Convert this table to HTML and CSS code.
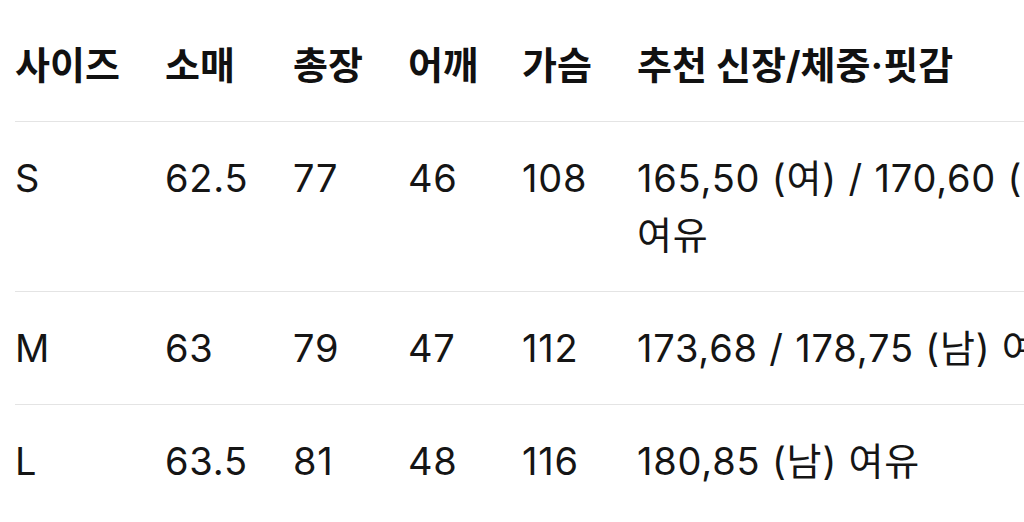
FILE: index.html
```html
<!DOCTYPE html>
<html lang="ko">
<head>
<meta charset="utf-8">
<link rel="stylesheet" href="styles.css">
</head>
<body>
<div class="wrap">
<table class="size-table">
  <colgroup>
    <col class="c1"><col class="c2"><col class="c3"><col class="c4"><col class="c5"><col class="c6">
  </colgroup>
  <thead>
    <tr><th>사이즈</th><th>소매</th><th>총장</th><th>어깨</th><th>가슴</th><th>추천 신장/체중·핏감</th></tr>
  </thead>
  <tbody>
    <tr><td>S</td><td>62.5</td><td>77</td><td>46</td><td>108</td><td>165,50 (여) / 170,60 (남) 여유</td></tr>
    <tr><td>M</td><td>63</td><td>79</td><td>47</td><td>112</td><td>173,68 / 178,75 (남) 여유</td></tr>
    <tr><td>L</td><td>63.5</td><td>81</td><td>48</td><td>116</td><td>180,85 (남) 여유</td></tr>
  </tbody>
</table>
</div>
</body>
</html>
```

FILE: styles.css
```css
html, body {
  margin: 0;
  padding: 0;
  background: #fff;
  overflow: hidden;
}
.wrap {
  padding: 9px 0 0 15px;
  width: 1200px;
}
.size-table {
  border-collapse: collapse;
  table-layout: fixed;
  width: 1097px;
  font-family: Inter, "Noto Sans CJK KR", sans-serif;
  font-size: 38px;
  line-height: 57px;
  color: #151515;
}
.c1 { width: 150px; }
.c2 { width: 128px; }
.c3 { width: 115px; }
.c4 { width: 114px; }
.c5 { width: 115px; }
.c6 { width: 475px; }
.size-table th,
.size-table td {
  text-align: left;
  vertical-align: top;
  padding: 28px 0 27px 0;
  border-bottom: 1px solid #e4e4e4;
}
.size-table td {
  letter-spacing: 0.8px;
}
.size-table th {
  font-weight: 700;
  color: #111;
}
.size-table tbody tr:last-child td {
  border-bottom: none;
}
```
